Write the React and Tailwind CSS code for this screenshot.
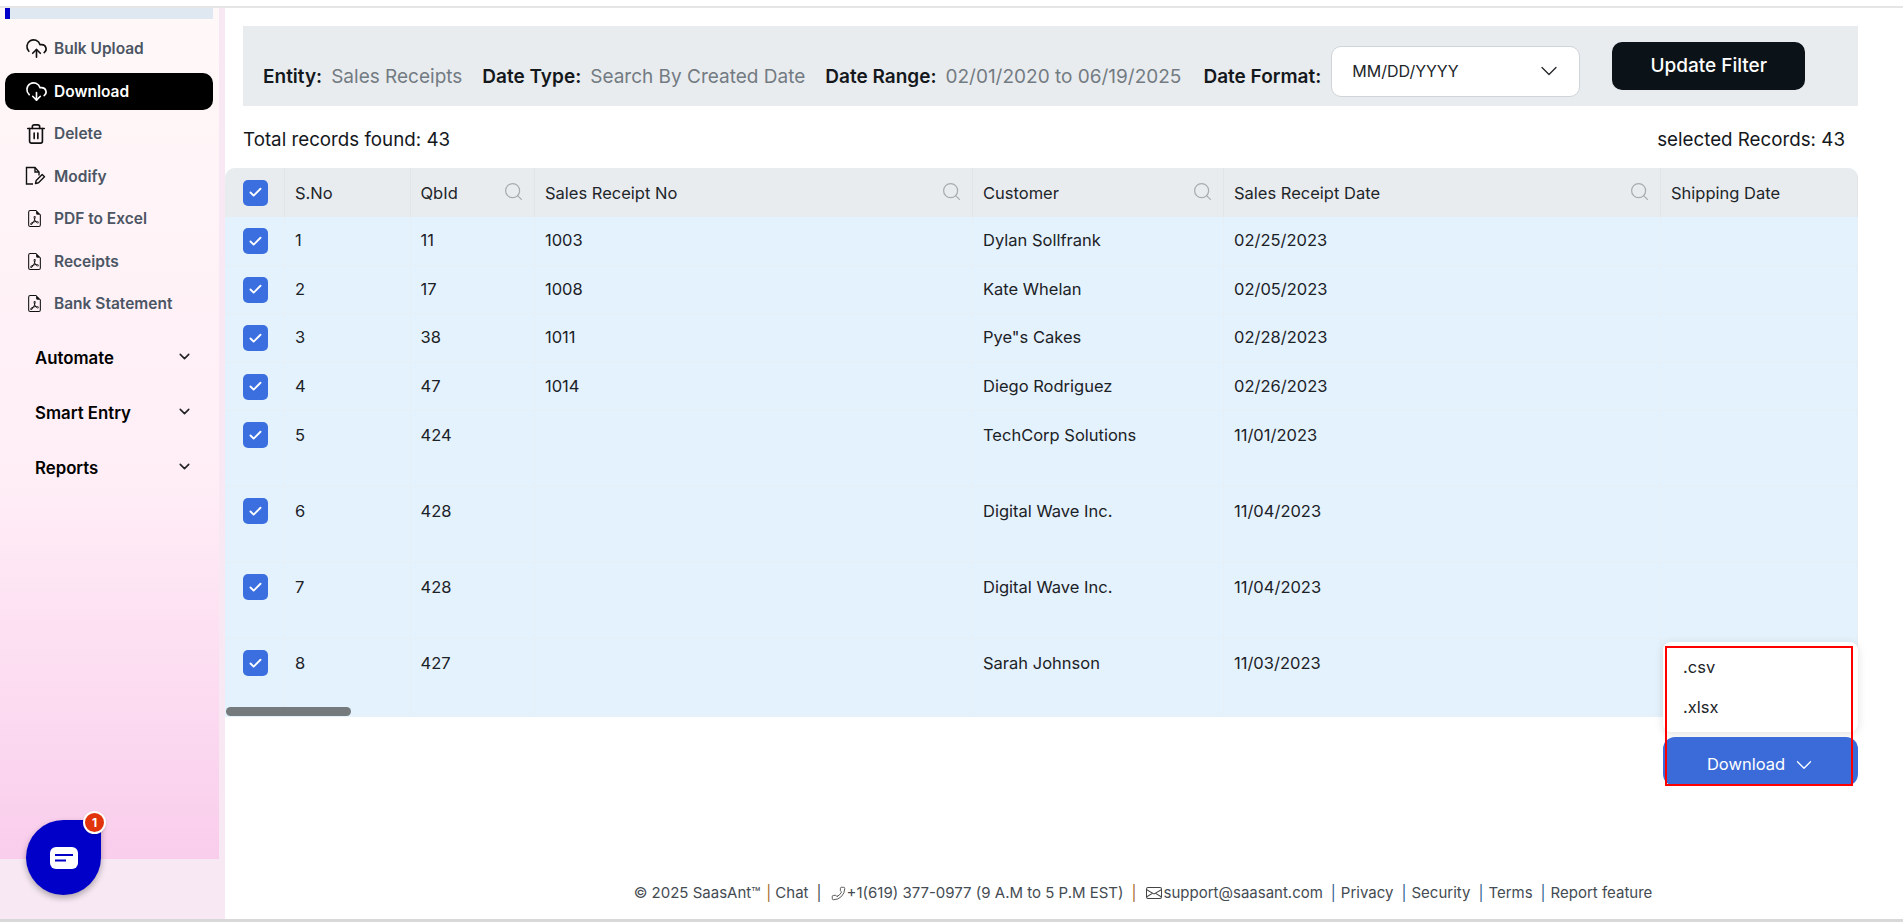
import { ChevronDown, Search, Check, Trash2, CloudUpload, CloudDownload, Phone } from "lucide-react";
import { BsFileEarmarkPdf, BsEnvelope } from "react-icons/bs";

const font = { fontFamily: "Inter, sans-serif" };

function ModifyIcon() {
  return (
    <svg width="21" height="20" viewBox="0 0 21 20" fill="none" stroke="currentColor" strokeWidth="1.4">
      <path d="M8 18H1.5V1.5h8.5l4 4.5v3.5" />
      <path d="M10 1.5V6h4" />
      <path d="M10.5 17.5l.7-3 6-6 2.3 2.3-6 6z" strokeLinejoin="round" />
    </svg>
  );
}

const menu = [
  ["Bulk Upload", <CloudUpload size={23} strokeWidth={1.7} />],
  ["Download", <CloudDownload size={23} strokeWidth={1.7} />],
  ["Delete", <Trash2 size={22} strokeWidth={1.8} />],
  ["Modify", <ModifyIcon />],
  ["PDF to Excel", <BsFileEarmarkPdf size={17} className="ml-[1px]" />],
  ["Receipts", <BsFileEarmarkPdf size={17} className="ml-[1px]" />],
  ["Bank Statement", <BsFileEarmarkPdf size={17} className="ml-[1px]" />],
];

const rows = [
  ["1", "11", "1003", "Dylan Sollfrank", "02/25/2023"],
  ["2", "17", "1008", "Kate Whelan", "02/05/2023"],
  ["3", "38", "1011", 'Pye"s Cakes', "02/28/2023"],
  ["4", "47", "1014", "Diego Rodriguez", "02/26/2023"],
  ["5", "424", "", "TechCorp Solutions", "11/01/2023"],
  ["6", "428", "", "Digital Wave Inc.", "11/04/2023"],
  ["7", "428", "", "Digital Wave Inc.", "11/04/2023"],
  ["8", "427", "", "Sarah Johnson", "11/03/2023"],
];

const cols = "grid grid-cols-[60px_125.5px_124.5px_438px_251px_437px_197px]";

function Box() {
  return (
    <span className="flex h-[26px] w-[25px] items-center justify-center rounded-[5px] bg-[#3b6fe0] text-white">
      <Check size={15} strokeWidth={3} />
    </span>
  );
}

function Head({ label, search }) {
  return (
    <div className="flex items-center justify-between border-r border-[#e2e5e8] pl-[10px] pr-[10px] pt-[1px] text-[16.5px] text-[#212529]">
      <span>{label}</span>
      {search && <Search size={21} strokeWidth={1.4} className="-mt-[3px] text-[#a8abae]" />}
    </div>
  );
}

function Field({ label, value, className }) {
  return (
    <span className={`flex items-center text-[19px] whitespace-nowrap ${className || ""}`}>
      <b className="font-semibold text-[#14181c]">{label}</b>
      {value && <span className="ml-[9px] text-[#737b82]">{value}</span>}
    </span>
  );
}

export default function App() {
  return (
    <div style={font} className="relative flex h-[922px] w-full flex-col overflow-hidden bg-white">
      <div className="h-[8px] shrink-0 border-b-2 border-[#e5e5e5]" />
      <div className="flex min-h-0 flex-1">
        <aside className="w-[225px] shrink-0 bg-[#f7e8f3]">
          <div className="h-[851px] w-[219px] bg-gradient-to-b from-[#fff8f8] via-[#ffeef6] via-55% to-[#f9cdec] pl-[5px] pr-[6px]">
            <div className="h-[11px] bg-[#dfe7f0]">
              <div className="h-full w-[5px] bg-[#0000c8]" />
            </div>
            <nav className="mt-[11px] flex flex-col">
              {menu.map(([label, icon]) => (
                <div
                  key={label}
                  className={`flex h-[37.5px] mb-[5px] items-center rounded-[10px] pl-[20px] text-[15.5px] font-semibold ${
                    label === "Download" ? "bg-black text-white" : "text-[#4b5563]"
                  }`}
                >
                  <span className={`flex w-[29px] shrink-0 ${label === "Download" ? "text-white" : "text-[#111]"}`}>{icon}</span>
                  {label}
                </div>
              ))}
            </nav>
            <div className="mt-[16px] flex flex-col gap-[25px]">
              {["Automate", "Smart Entry", "Reports"].map((label) => (
                <div key={label} className="flex h-[30px] items-center justify-between pl-[30px] pr-[20px] text-[16.8px] font-semibold text-black">
                  {label}
                  <ChevronDown size={17} strokeWidth={2.2} className="-mt-[5px] text-[#222]" />
                </div>
              ))}
            </div>
          </div>
        </aside>

        <main className="flex min-w-0 flex-1 flex-col">
          <div className="pl-[18px] pr-[45px]">
            <div className="mt-[18px] flex h-[80px] items-center bg-[#e9ecef] pl-[20px]">
              <div className="mt-[23px] flex items-center gap-[20px]">
                <Field label="Entity:" value="Sales Receipts" />
                <Field label="Date Type:" value="Search By Created Date" />
                <Field label="Date Range:" value="02/01/2020 to 06/19/2025" />
                <Field label="Date Format:" className="ml-[2px]" />
              </div>
              <div className="ml-[10px] mt-[10px] flex h-[51px] w-[249px] shrink-0 items-center justify-between rounded-[10px] border border-[#ced4da] bg-white pl-[20px] pr-[16px] text-[16px] text-[#212529]">
                MM/DD/YYYY
                <ChevronDown size={28} strokeWidth={1.1} />
              </div>
              <button className="ml-[32px] -mt-[1px] h-[48px] w-[193px] shrink-0 rounded-[10px] bg-[#0b1218] pt-[2px] text-[19px] font-medium text-white">
                Update Filter
              </button>
            </div>
            <div className="flex h-[62px] items-center justify-between pr-[13px] pt-[7px] text-[18.75px] text-[#14181c]">
              <span>Total records found: 43</span>
              <span>selected Records: 43</span>
            </div>
          </div>

          <div className="relative -mb-px mr-[45px] h-[549px] overflow-hidden rounded-t-[10px] bg-[#e3f2fd]">
            <div className={`${cols} h-[49px] bg-[#e9ecef]`}>
              <div className="flex items-center justify-center border-r border-[#e2e5e8] pl-[2px]"><Box /></div>
              <Head label="S.No" />
              <Head label="QbId" search />
              <Head label="Sales Receipt No" search />
              <Head label="Customer" search />
              <Head label="Sales Receipt Date" search />
              <Head label="Shipping Date" />
            </div>
            {rows.map((r, i) => (
              <div key={r[0]} className={`${cols} ${i < 4 ? "h-[48.5px]" : "h-[76px]"} border-b border-[#e6eff5] text-[16.5px] text-[#1c2126]`}>
                <div className="flex h-full justify-center border-r border-[#e6eff5] pl-[2px] pt-[11px]"><Box /></div>
                {[r[0], r[1], r[2], r[3], r[4], ""].map((v, j) => (
                  <div key={j} className={`h-full border-r border-[#e6eff5] pl-[10px] ${i < 4 ? "pt-[11px]" : "pt-[12px]"}`}>{v}</div>
                ))}
              </div>
            ))}
            <div className="absolute bottom-[1px] left-[1px] h-[9px] w-[125px] rounded-full bg-[#757b7d]" />
          </div>

          <footer className="mt-auto mb-[6px] flex h-[40px] items-center justify-center whitespace-nowrap pl-[158px] text-[15px] text-[#444b52]">
            © 2025 SaasAnt™
            <span className="ml-[6px] mr-[4px] text-[#a5682a]">|</span>
            Chat
            <span className="ml-[8px] mr-[9px] text-[#444b52]">|</span>
            <Phone size={15} strokeWidth={1.4} className="mr-[1px] -scale-x-100 text-[#444]" />
            +1(619) 377-0977 (9 A.M to 5 P.M EST)
            <span className="ml-[8px] mr-[9px] text-[#a5682a]">|</span>
            <BsEnvelope size={16} className="mr-[2px] text-[#444]" />
            support@saasant.com
            <span className="ml-[8px] mr-[5px] text-[#2f5f8f]">|</span>
            Privacy
            <span className="ml-[8px] mr-[5px] text-[#2f5f8f]">|</span>
            Security
            <span className="ml-[8px] mr-[5px] text-[#2f5f8f]">|</span>
            Terms
            <span className="ml-[8px] mr-[5px] text-[#2f5f8f]">|</span>
            Report feature
          </footer>
        </main>
      </div>
      <div className="h-[3px] shrink-0 bg-[#d8d8d8]" />

      {/* chat launcher */}
      <div className="absolute left-[26px] top-[820px] flex h-[75px] w-[75px] items-center justify-center rounded-[50%_0_50%_50%] bg-[#0000c8] shadow-[0_3px_6px_rgba(0,0,0,0.3)]">
        <svg width="28" height="22" viewBox="0 0 28 22">
          <rect width="28" height="22" rx="6" fill="#fff" />
          <path d="M5 8h18M5 13.5h11" stroke="#0000c8" strokeWidth="2" />
        </svg>
        <span className="absolute -right-[5px] -top-[9px] flex h-[23px] w-[23px] items-center justify-center rounded-full border-2 border-white bg-[#e2340c] text-[12px] font-bold text-white shadow">
          1
        </span>
      </div>

      {/* download dropdown */}
      <div className="absolute left-[1663px] top-[642px] w-[195px]">
        <div className="flex h-[90px] flex-col justify-center gap-[16px] rounded-[8px] bg-white pl-[20px] text-[16.5px] text-[#212529] shadow-[0_2px_10px_rgba(0,0,0,0.12)]">
          <span className="leading-[24px]">.csv</span>
          <span className="leading-[24px]">.xlsx</span>
        </div>
        <button className="mt-[5px] flex h-[49px] w-full items-center justify-center gap-[6px] rounded-[12px] bg-[#3b6bd9] pl-[3px] pt-[6px] text-[16.5px] text-white">
          Download
          <ChevronDown size={26} strokeWidth={1.2} />
        </button>
      </div>
      <div className="absolute left-[1665px] top-[646px] h-[140px] w-[188px] border-2 border-[#f00]" />
    </div>
  );
}
